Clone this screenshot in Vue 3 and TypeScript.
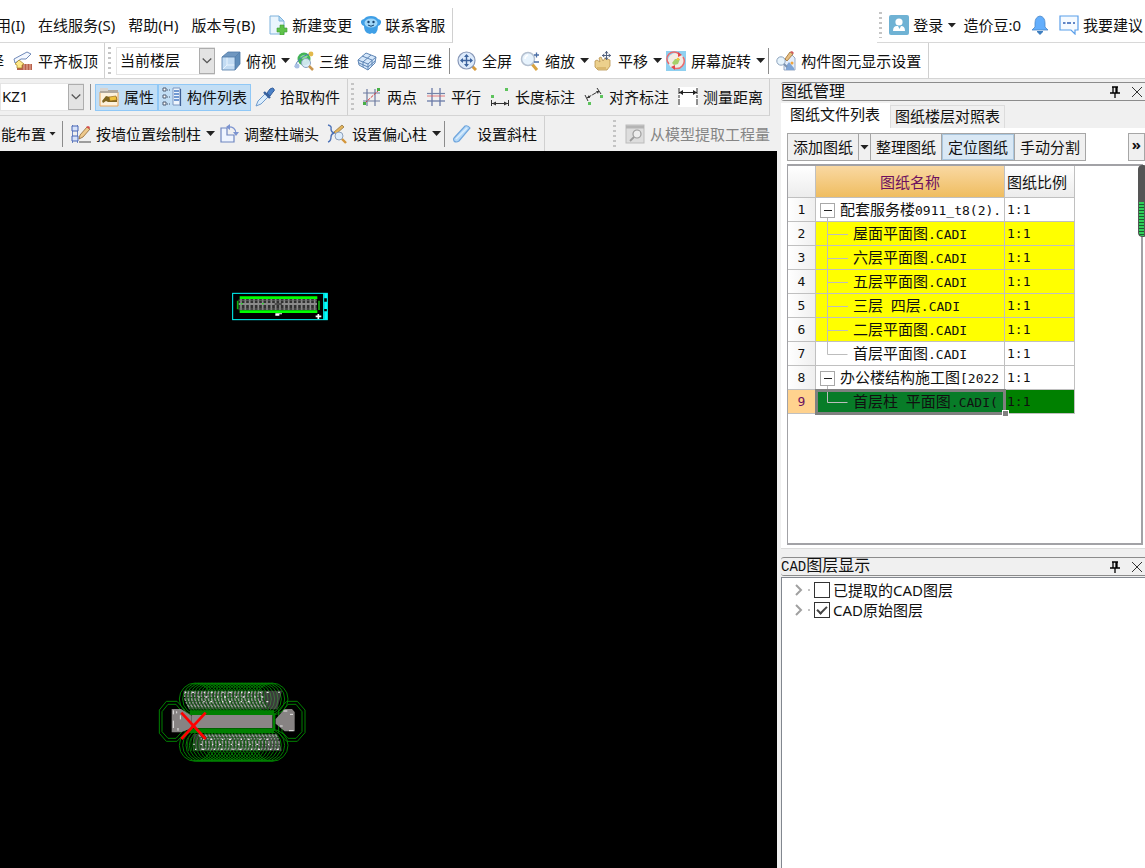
<script setup lang="ts">
import { ref } from 'vue'

interface Tool {
  icon: string
  label: string
  caret?: boolean
  active?: boolean
}

interface Run {
  text: string
  mono?: boolean
}

interface Drawing {
  kind: 'root' | 'child' | 'last'
  runs: Run[]
  tone: 'plain' | 'yellow' | 'green'
}

const menus: string[] = ['用(I)', '在线服务(S)', '帮助(H)', '版本号(B)']

const alignTools: Tool[] = [{ icon: 'alignTop', label: '平齐板顶' }]
const viewTools: Tool[] = [
  { icon: 'cube', label: '俯视', caret: true },
  { icon: 'orbit', label: '三维' },
  { icon: 'partial', label: '局部三维' },
]
const zoomTools: Tool[] = [
  { icon: 'fullscreen', label: '全屏' },
  { icon: 'zoom', label: '缩放', caret: true },
  { icon: 'pan', label: '平移', caret: true },
  { icon: 'rotate', label: '屏幕旋转', caret: true },
]
const displayTools: Tool[] = [{ icon: 'display', label: '构件图元显示设置' }]

const memberTools: Tool[] = [
  { icon: 'props', label: '属性', active: true },
  { icon: 'list', label: '构件列表', active: true },
  { icon: 'picker', label: '拾取构件' },
]
const axisTools: Tool[] = [
  { icon: 'twoPoint', label: '两点' },
  { icon: 'parallel', label: '平行' },
  { icon: 'length', label: '长度标注' },
  { icon: 'aligned', label: '对齐标注' },
  { icon: 'measure', label: '测量距离' },
]

const columnTools: Tool[] = [
  { icon: 'wallColumn', label: '按墙位置绘制柱', caret: true },
  { icon: 'endColumn', label: '调整柱端头' },
  { icon: 'offset', label: '设置偏心柱', caret: true },
]
const slantTools: Tool[] = [{ icon: 'slant', label: '设置斜柱' }]
const modelTools: Tool[] = [{ icon: 'model', label: '从模型提取工程量' }]

const drawings: Drawing[] = [
  { kind: 'root', runs: [{ text: '配套服务楼' }, { text: '0911_t8(2).', mono: true }], tone: 'plain' },
  { kind: 'child', runs: [{ text: '屋面平面图' }, { text: '.CADI', mono: true }], tone: 'yellow' },
  { kind: 'child', runs: [{ text: '六层平面图' }, { text: '.CADI', mono: true }], tone: 'yellow' },
  { kind: 'child', runs: [{ text: '五层平面图' }, { text: '.CADI', mono: true }], tone: 'yellow' },
  { kind: 'child', runs: [{ text: '三层' }, { text: ' ', mono: true }, { text: '四层' }, { text: '.CADI', mono: true }], tone: 'yellow' },
  { kind: 'child', runs: [{ text: '二层平面图' }, { text: '.CADI', mono: true }], tone: 'yellow' },
  { kind: 'last', runs: [{ text: '首层平面图' }, { text: '.CADI', mono: true }], tone: 'plain' },
  { kind: 'root', runs: [{ text: '办公楼结构施工图' }, { text: '[2022', mono: true }], tone: 'plain' },
  { kind: 'last', runs: [{ text: '首层柱' }, { text: ' ', mono: true }, { text: '平面图' }, { text: '.CADI(', mono: true }], tone: 'green' },
]
const selected = ref(8)

const floor = ref('当前楼层')
const member = ref('KZ1')
const extracted = ref(false)
const original = ref(true)

const range = (from: number, to: number, step: number): number[] => {
  const out: number[] = []
  for (let v = from; v <= to; v += step) out.push(v)
  return out
}
const rings = range(166, 396, 10)
const bars = range(57, 285, 13)

const icons: Record<string, string> = {
  newDoc:
    '<path d="M2 1h9l5 5v13H2z" fill="#eaf5fd" stroke="#7fb2dc"/><path d="M11 1v5h5z" fill="#b7dcf5" stroke="#7fb2dc"/><path d="M12 10h4v3h3v4h-3v3h-4v-3H9v-4h3z" fill="#5fc24a" stroke="#3d9a30" stroke-width=".6"/>',
  service:
    '<path d="M3 4Q5 1 10 1t7 3q4 1 3 4-1 3-3 3 0 4-2 7l-2 1-2-1-2 1-3-1Q3 16 3 11 1 11 0 8t3-4z" fill="#3f9fe6"/><ellipse cx="10" cy="8" rx="6.500" ry="4.500" fill="#9fd6f8"/><circle cx="7.500" cy="7" r="1.200" fill="#14406e"/><circle cx="12.500" cy="7" r="1.200" fill="#14406e"/><path d="M7 10q3 2.500 6 0" stroke="#14406e" fill="none"/>',
  user:
    '<rect x="0" y="0" width="20" height="20" rx="2" fill="#6fb2d4"/><circle cx="10" cy="7" r="3.600" fill="#fff"/><path d="M4 16q0-5 4-5h4q4 0 4 5z" fill="#fff"/><path d="M9 11h3l-1.500 3z" fill="#6fb2d4"/>',
  bell:
    '<path d="M10 1q5 1 5 7v4l3 3H2l3-3V8q0-6 5-7z" fill="#63aefc" stroke="#4a86c8" stroke-width=".8"/><path d="M7 16h6v1l-3 3-3-3z" fill="#3f7fc0"/>',
  chat:
    '<path d="M1 1h18v14h-3v4l-4-4H1z" fill="#f5faff" stroke="#5b9fea" stroke-width="1.200"/><path d="M4 8h2.500M8 8h4M14 8h2" stroke="#2f5fb4" stroke-width="1.400"/>',
  alignTop:
    '<path d="M1 8L14 1l4 2-5 5H8l-6 4z" fill="#f4f8ff" stroke="#6f89b8"/><path d="M9 13h10v6H4v-4h5z" fill="#b8604c"/><path d="M11 13v6M14 13v6M17 13v6" stroke="#e8b6a0"/><path d="M6 9l5 4-2 1v3H4v-3l-2-1z" fill="#ffe98a" stroke="#a08020" stroke-width=".7"/>',
  cube:
    '<path d="M1 6l6-5h12l-5 5z" fill="#6f97c0"/><path d="M14 6l5-5v12l-5 6z" fill="#5f8dba"/><path d="M1 6h13v13H1z" fill="#c3dcf3"/><path d="M6 6v8l-5 5M6 14h8" stroke="#e9f4fd" fill="none"/><path d="M1 6h13v13H1zM1 6l6-5h12v12l-5 6M14 6l5-5" stroke="#4f79a6" stroke-width=".8" fill="none"/>',
  orbit:
    '<circle cx="10" cy="8" r="6.500" fill="#42b358"/><path d="M6 6q4-4 8-1-3 3-2 6" fill="#8be08f"/><path d="M1 16q2-9 14-13" stroke="#4c79b8" fill="none"/><circle cx="17" cy="3" r="2.400" fill="#e2b94c"/><circle cx="3" cy="15" r="2.500" fill="#a9c0e4"/><circle cx="12" cy="12" r="4.500" fill="#dcecfb" fill-opacity=".9" stroke="#8aa3c0"/><path d="M15 15l4 4" stroke="#c99650" stroke-width="2.500"/>',
  partial:
    '<path d="M1 9l8-7 10 4-1 6-7 7-9-5z" fill="#d5e7fa"/><path d="M1 9l10 4 8-7M11 13v6M5 5l10 4M6 11l8-7M6 11v5M15 9v6M2 12l9 4 7-6M1 9l8-7 10 4-1 6-7 7-9-5z" stroke="#5f86b6" fill="none"/>',
  fullscreen:
    '<path d="M14 14l5 5" stroke="#d79a3c" stroke-width="3"/><circle cx="9.500" cy="9.500" r="8.500" fill="#dceafb" stroke="#8898b8" stroke-width="1.200"/><path d="M9.500 4v11M4 9.500h11" stroke="#3c639e" stroke-width="1.400"/><path d="M9.500 3L7 6h5zM9.500 16L7 13h5zM3 9.500L6 7v5zM16 9.500L13 7v5z" fill="#3c639e"/>',
  zoom:
    '<path d="M12 13l5 6" stroke="#d9a340" stroke-width="3"/><circle cx="8" cy="8" r="6.500" fill="#e7f3fd" stroke="#b4c0d0" stroke-width="1.500"/><path d="M5 8q0-3 3-4" stroke="#fff" stroke-width="1.500" fill="none"/><path d="M14 4h5M16.500 1.500v5M14 11h5" stroke="#4a6ea6" stroke-width="1.300"/>',
  pan:
    '<path d="M2 10l2-1 3 2-1-4 2-1 2 4 2-3 2 1 3 1v6l-3 4H5l-3-3z" fill="#ecd08c" stroke="#b8924c" stroke-width=".8"/><path d="M4 17h9" stroke="#c9a050"/><path d="M13.500 0v9M9 4.500h9" stroke="#53627e"/><path d="M13.500 0l-2 2.200h4zM13.500 9l-2-2.200h4zM9 4.500l2.200-2v4zM18 4.500l-2.200-2v4z" fill="#53627e"/>',
  rotate:
    '<rect x="0" y="0" width="20" height="20" fill="#8fd0f0"/><circle cx="10" cy="10" r="8" fill="#f3ece4"/><path d="M3 13a7 7 0 0 1 10-10M17 6a7.500 7.500 0 0 1-9 11" stroke="#ec6a6c" stroke-width="1.500" fill="none"/><path d="M12 1l4 3-4 2zM9 19l-4-3 4-2z" fill="#e2474c"/><path d="M6 12l3-4 5 0-2 5-4 1z" fill="#a6d06a"/><circle cx="12" cy="8" r="1.300" fill="#f4c53c"/>',
  display:
    '<path d="M8 10L15 3l4 4v12H8z" fill="#e4eefb" stroke="#7f95b8" stroke-width=".8"/><path d="M10 15l3-4 5 6v2h-8z" fill="#7fa4d4"/><circle cx="5" cy="10" r="4.200" fill="#e6f3fc" stroke="#8da3bd"/><path d="M8 13l3 3" stroke="#7d93b0" stroke-width="2"/><path d="M9 8l5-7 3 2-6 7z" fill="#e8c084" stroke="#9a6c30" stroke-width=".8"/><path d="M14 1l3 2 1-1-2-2z" fill="#d2565a"/><circle cx="16" cy="12" r="1.500" fill="#f0a43c"/>',
  props:
    '<path d="M1 5h18v14H1z" fill="#fdf1dc" stroke="#e8a558"/><path d="M1 3h18v3H1z" fill="#b0a89e"/><path d="M1 1h8v3H1z" fill="#d8d4cf"/><path d="M3 14l4-5 4 1 2 2 5-2v5H9l-2-1-3 2z" fill="#7e6420"/><path d="M10 10l7-1 1 4-7 1z" fill="#f0c23e" stroke="#8a5d14" stroke-width=".6"/>',
  list:
    '<path d="M1 1h3v3H1zM1 8h3v3H1zM1 15h3v3H1z" fill="#fff" stroke="#4c5a70"/><path d="M5 3h3M5 10h3M5 17h3" stroke="#4c5a70" stroke-dasharray="1 1"/><path d="M11 1h7v17h-7z" fill="#eef5fd" stroke="#7c97c0"/><path d="M12 4h5M12 7h5M12 10h5M12 13h5" stroke="#4a7cc4" stroke-width="1.300"/><path d="M18.500 2v17" stroke="#3e5f94" stroke-width="1.200"/>',
  picker:
    '<path d="M1 19l2-5L11 6l3 3-8 8z" fill="#dceefd" stroke="#6f9bcd"/><path d="M9 5l6 6" stroke="#355f9c" stroke-width="2.400"/><path d="M12 6l3-4q3-2 4 0 1 2-1 3l-3 4z" fill="#4a80c6" stroke="#355f9c"/>',
  twoPoint:
    '<path d="M5 2v17M13 2v17M1 6h17M1 14h17" stroke="#6d7ba0" stroke-width="1.200"/><path d="M3 16L17 3" stroke="#d43c3c" stroke-dasharray="3 1"/><path d="M1 15h3v3H1zM15 1h3v3h-3z" fill="#47b045"/>',
  parallel:
    '<path d="M6 1v18M14 1v18" stroke="#6a7aa8" stroke-width="1.300"/><path d="M1 6.500h18" stroke="#7484a8" stroke-width="1.200"/><path d="M1 9h18" stroke="#df5c5c" stroke-width=".8"/><path d="M1 14h18" stroke="#6a7aa8" stroke-width="1.300"/>',
  length:
    '<path d="M1 8h3v3H1zM15 1h3v3h-3z" fill="#5dc35c"/><path d="M1.500 13v6M18.500 13v6" stroke="#333"/><path d="M2 16.500h16" stroke="#333"/><path d="M2 16.500l4-2v4zM18 16.500l-4-2v4z" fill="#333"/>',
  aligned:
    '<path d="M1 8l3 6M13 1l4 6" stroke="#333"/><path d="M3 11L15 4" stroke="#333" stroke-dasharray="5 1"/><path d="M3 11l2-3 1 3zM15 4l-3 0 2 3z" fill="#333"/><path d="M4 15h3v3H4zM16 8h3v3h-3z" fill="#5dc35c"/>',
  measure:
    '<rect width="20" height="20" fill="#fff"/><path d="M1 1v18M19 1v18" stroke="#222" stroke-dasharray="6 1 3 1"/><path d="M1 5.500h18" stroke="#222"/><path d="M1 5.500l4-2.500v5zM19 5.500l-4-2.500v5z" fill="#222"/>',
  wallColumn:
    '<path d="M1.500 1v18M6.500 1v18" stroke="#6f88c4" stroke-width="1"/><path d="M1 2h6v5H1zM1 12h6v5H1z" fill="#d6e2fa" stroke="#4665b4"/><path d="M8 18h12" stroke="#777" stroke-width="1.400"/><path d="M9 11l7-8 3 2-7 8-4 2z" fill="#eec98c" stroke="#8d6736" stroke-width=".8"/><path d="M15 3l3 2 1-2-2-1z" fill="#d84c4c"/>',
  endColumn:
    '<path d="M2 4h6v7h7v7H2z" fill="#eef4ff" stroke="#6f86c0" stroke-width="1.200"/><path d="M8 3q9-1 9 7" fill="none" stroke="#7b93d0" stroke-width="1.300"/><path d="M11 0L7 3l4 3zM14 8h6l-3 4z" fill="#7b93d0"/>',
  offset:
    '<path d="M1 1q4 1 3 4 0 3 3 4-3 1-3 4 0 4-3 5" fill="none" stroke="#4f74b8" stroke-width="1.400"/><path d="M7 8l8-7 2 2-8 7z" fill="#e2b45c" stroke="#8a6a34" stroke-width=".7"/><circle cx="12" cy="12" r="4" fill="#ddecfb" stroke="#8da0ba"/><path d="M15 15l4 4" stroke="#d3953a" stroke-width="2.400"/>',
  slant:
    '<path d="M2 14L13 2q3-1 5 2L7 17q-3 2-5 0-1-2 0-3z" fill="#b4d8f7" stroke="#6fa5dc" stroke-width="1.200"/><path d="M4 15L15 4" stroke="#dceefd" stroke-width="1.500"/>',
  model:
    '<rect x="1" y="1" width="18" height="18" fill="#ddd" stroke="#bbb"/><path d="M1 3h18" stroke="#b4b4b4" stroke-width="3"/><circle cx="12" cy="10" r="4" fill="#eee" stroke="#9c9c9c" stroke-width="1.200"/><path d="M9 13l-4 4" stroke="#9c9c9c" stroke-width="1.800"/>',
}

const viewRow = [viewTools, zoomTools, displayTools]
</script>

<template>
  <div class="app">
    <header class="menubar">
      <nav class="menu">
        <button v-for="m in menus" :key="m" type="button" class="menu-item">{{ m }}</button>
        <button type="button" class="menu-item"><svg class="icon" viewBox="0 0 20 20" v-html="icons.newDoc" />新建变更</button>
        <button type="button" class="menu-item service"><svg class="icon" viewBox="0 0 20 20" v-html="icons.service" />联系客服</button>
      </nav>
      <div class="account">
        <span class="grip" />
        <button type="button" class="menu-item"><svg class="icon" viewBox="0 0 20 20" v-html="icons.user" />登录<span class="caret" /></button>
        <span class="beans">造价豆:0</span>
        <button type="button" class="menu-item bell" aria-label="消息"><svg class="icon" viewBox="0 0 20 20" v-html="icons.bell" /></button>
        <button type="button" class="menu-item"><svg class="icon" viewBox="0 0 20 20" v-html="icons.chat" />我要建议</button>
      </div>
    </header>

    <div class="viewbar">
      <div class="group first">
        <button type="button" class="clipped"><span>择</span></button>
        <button v-for="t in alignTools" :key="t.label" type="button" class="tool">
          <svg class="icon" viewBox="0 0 20 20" v-html="icons[t.icon]" />{{ t.label }}
        </button>
      </div>
      <div class="group">
        <span class="grip" />
        <label class="combo floor">
          <select v-model="floor" aria-label="楼层"><option>当前楼层</option></select>
          <span class="combo-arrow"><svg viewBox="0 0 16 28"><path d="M3 11l5 5 5-5" /></svg></span>
        </label>
        <template v-for="(tools, i) in viewRow" :key="i">
          <span v-if="i > 0" class="sep" />
          <button v-for="t in tools" :key="t.label" type="button" class="tool" :class="{ drop: t.caret }">
            <svg class="icon" viewBox="0 0 20 20" v-html="icons[t.icon]" />{{ t.label }}<span v-if="t.caret" class="caret" />
          </button>
        </template>
      </div>
    </div>

    <div class="body">
      <main class="work">
        <div class="bar">
          <div class="group">
            <label class="combo member">
              <select v-model="member" aria-label="构件"><option>KZ1</option></select>
              <span class="combo-arrow"><svg viewBox="0 0 16 28"><path d="M3 11l5 5 5-5" /></svg></span>
            </label>
            <span class="sep wide" />
            <button v-for="t in memberTools" :key="t.label" type="button" class="tool" :class="{ active: t.active }" :aria-pressed="t.active">
              <svg class="icon" viewBox="0 0 20 20" v-html="icons[t.icon]" />{{ t.label }}
            </button>
          </div>
          <div class="group spaced">
            <span class="grip" />
            <button v-for="t in axisTools" :key="t.label" type="button" class="tool">
              <svg class="icon" viewBox="0 0 20 20" v-html="icons[t.icon]" />{{ t.label }}
            </button>
          </div>
        </div>
        <div class="bar lower">
          <div class="group">
            <button type="button" class="smart">能布置<span class="caret" /></button>
            <span class="sep wide" />
            <button v-for="t in columnTools" :key="t.label" type="button" class="tool" :class="{ drop: t.caret }">
              <svg class="icon" viewBox="0 0 20 20" v-html="icons[t.icon]" />{{ t.label }}<span v-if="t.caret" class="caret" />
            </button>
            <span class="sep" />
            <button v-for="t in slantTools" :key="t.label" type="button" class="tool">
              <svg class="icon" viewBox="0 0 20 20" v-html="icons[t.icon]" />{{ t.label }}
            </button>
          </div>
          <div class="group model">
            <span class="grip" />
            <button v-for="t in modelTools" :key="t.label" type="button" class="tool" disabled>
              <svg class="icon" viewBox="0 0 20 20" v-html="icons[t.icon]" />{{ t.label }}
            </button>
          </div>
        </div>

        <div class="canvas">
          <svg class="sheet-a" viewBox="0 0 348 141">
            <g fill="none" stroke="#00ffff">
              <rect x="32" y="31" width="284" height="79" stroke-width="3" />
              <path d="M305 31v79" stroke-width="3" />
              <path d="M311 31v15M311 56v22M311 85v25" stroke-width="9" />
            </g>
            <rect x="50" y="48" width="235" height="34" fill="#303030" />
            <path v-for="x in bars" :key="x" :d="`M${x} 48v33`" stroke="#8a8a8a" stroke-width="5" />
            <path d="M50 63h235" stroke="#8a8a8a" stroke-width="6" />
            <path d="M50 52h235M50 78h235" stroke="#707070" stroke-width="2" />
            <path d="M158 63h22" stroke="#111" stroke-width="3" />
            <path d="M53 44h233M53 86h233" stroke="#00ff00" stroke-width="8" />
            <path d="M47 53v26M291 53v28" stroke="#10b010" stroke-width="5" />
            <path d="M160 91h20v3h-8v4h-12z" fill="#fff" />
            <path d="M57 61h5v3h-5zM120 61h5v3h-5z" fill="#00ff00" />
            <path d="M281 100h17M289 93v15" stroke="#fff" stroke-width="5" />
          </svg>
          <svg class="sheet-b" viewBox="0 0 570 315">
            <g fill="none" stroke="#008000" stroke-width="3">
              <circle v-for="x in rings" :key="'t' + x" :cx="x" cy="87" r="48" />
              <circle v-for="x in rings" :key="'b' + x" :cx="x" cy="226" r="48" />
              <path d="M79 94h32l24 26v68l-24 26H79l-21-24v-70z" />
              <path d="M84 103h24l18 22v60l-18 20H84l-18-20v-60z" />
              <path d="M440 94h32l23 26v68l-23 26h-32l-24-26v-68z" />
              <path d="M444 103h24l18 22v60l-18 20h-24l-18-20v-60z" />
            </g>
            <path d="M130 62h296l-14 56H146zM160 192h250l16 50H160z" fill="#6c6c6c" fill-opacity=".55" />
            <g fill="none" stroke="#0a5a0a" stroke-width="3">
              <path v-for="x in rings" :key="'gt' + x" :d="`M${x - 24} 60q-8 26 14 60`" />
              <path v-for="x in rings" :key="'gb' + x" :d="`M${x - 12} 190q-18 20-8 54`" />
            </g>
            <g fill="none" stroke="#9a9a9a" stroke-width="4" stroke-dasharray="9 3 5 4">
              <path v-for="x in rings" :key="'ht' + x" :d="`M${x - 30} 64q-8 26 14 50`" />
              <path v-for="x in rings" :key="'hb' + x" :d="`M${x + 10} 194q18 20 8 46`" />
            </g>
            <g fill="none" stroke="#e6e6e6" stroke-width="4" stroke-dasharray="4 17 6 29">
              <path d="M135 67h290M175 81h220M190 95h210M190 208h210M160 223h240M165 238h260" />
            </g>
            <path d="M150 128h252M150 182h252" stroke="#008000" stroke-width="14" />
            <path d="M402 130v50" stroke="#008000" stroke-width="8" />
            <rect x="155" y="135" width="242" height="39" fill="#8b8585" />
            <path d="M95 117h28l32 20v38l-32 12H95z" fill="#878383" />
            <path d="M100 121v12M100 152v22M110 124v6M114 174v8M121 136v12" stroke="#e8e8e8" stroke-width="3" />
            <path d="M464 126v58h-30l-27-23v-14l27-30h22z" fill="#878383" />
            <path d="M430 123h12M450 133h9M447 182h14M420 168h8" stroke="#e8e8e8" stroke-width="3" />
            <path d="M124 128l73 79M197 128l-73 79" stroke="#ff0000" stroke-width="8" />
          </svg>
        </div>
      </main>

      <aside class="side">
        <section class="drawings">
          <div class="caption">
            <h2>图纸管理</h2>
            <button type="button" aria-label="固定"><svg class="mark" viewBox="0 0 12 12"><path d="M3 1h6M4 1v6M7 1v6M8 1v6M1 7h10M6 7v5" stroke="#000" stroke-width="1.300" /></svg></button>
            <button type="button" aria-label="关闭"><svg class="mark" viewBox="0 0 12 12"><path d="M1 1l10 10M11 1L1 11" stroke="#333" /></svg></button>
          </div>
          <div class="tabs">
            <button type="button" class="tab on">图纸文件列表</button>
            <button type="button" class="tab">图纸楼层对照表</button>
          </div>
          <div class="page">
            <div class="actions">
              <button type="button" class="action">添加图纸</button>
              <button type="button" class="action more" aria-label="更多添加"><span class="caret" /></button>
              <button type="button" class="action">整理图纸</button>
              <button type="button" class="action pressed" aria-pressed="true">定位图纸</button>
              <button type="button" class="action">手动分割</button>
              <button type="button" class="action overflow">»</button>
            </div>
            <div class="grid">
              <table>
                <colgroup><col class="c-num" /><col class="c-name" /><col class="c-scale" /></colgroup>
                <thead>
                  <tr><th /><th class="name">图纸名称</th><th class="scale">图纸比例</th></tr>
                </thead>
                <tbody>
                  <tr v-for="(d, i) in drawings" :key="i" :class="[d.tone, { selected: i === selected }]" @click="selected = i">
                    <th scope="row">{{ i + 1 }}</th>
                    <td class="name">
                      <div class="node">
                        <svg v-if="d.kind === 'root'" class="branch root" viewBox="0 0 20 23">
                          <rect x="4.500" y="5.500" width="14" height="14" fill="#fff" stroke="#a8a8a8" />
                          <path d="M8 12.500h8" stroke="#222" /><path d="M11.500 20v3" stroke="#b8b8b8" />
                        </svg>
                        <svg v-else class="branch" viewBox="0 0 33 23">
                          <path :d="d.kind === 'child' ? 'M11.500 0v23M12 12.500h20' : 'M11.500 0v12.500h20'" fill="none" stroke="#bdbdbd" />
                        </svg>
                        <span class="title"><span v-for="(r, k) in d.runs" :key="k" :class="{ mono: r.mono }">{{ r.text }}</span></span>
                      </div>
                      <span v-if="i === selected" class="handle" />
                    </td>
                    <td class="mono">1:1</td>
                  </tr>
                </tbody>
              </table>
              <span class="meter" />
            </div>
          </div>
        </section>

        <section class="layers">
          <div class="caption">
            <h2><span class="cad">CAD</span>图层显示</h2>
            <button type="button" aria-label="固定"><svg class="mark" viewBox="0 0 12 12"><path d="M3 1h6M4 1v6M7 1v6M8 1v6M1 7h10M6 7v5" stroke="#000" stroke-width="1.300" /></svg></button>
            <button type="button" aria-label="关闭"><svg class="mark" viewBox="0 0 12 12"><path d="M1 1l10 10M11 1L1 11" stroke="#333" /></svg></button>
          </div>
          <ul class="tree">
            <li>
              <svg class="chev" viewBox="0 0 20 20"><path d="M2 5l5 5-5 5" fill="none" stroke="#a0a0a0" stroke-width="2" /><path d="M14 10h2" stroke="#888" /></svg>
              <label><input v-model="extracted" type="checkbox" />已提取的CAD图层</label>
            </li>
            <li>
              <svg class="chev" viewBox="0 0 20 20"><path d="M2 5l5 5-5 5" fill="none" stroke="#a0a0a0" stroke-width="2" /><path d="M14 10h2" stroke="#888" /></svg>
              <label><input v-model="original" type="checkbox" />CAD原始图层</label>
            </li>
          </ul>
        </section>
      </aside>
    </div>
  </div>
</template>

<style>
body {
  margin: 0;
}
</style>

<style scoped>
.app {
  display: flex;
  flex-direction: column;
  height: 100vh;
  overflow: hidden;
  background: #fff;
  color: #111;
  font: 15px/20px "Noto Sans", "Noto Sans CJK SC", sans-serif;
}
.app *,
.app *::before {
  box-sizing: border-box;
}
button {
  padding: 0;
  border: 0;
  background: none;
  color: inherit;
  font: inherit;
  white-space: nowrap;
}
.icon {
  flex: none;
  width: 20px;
  height: 20px;
}
.caret {
  flex: none;
  width: 9px;
  height: 5px;
  background: #222;
  clip-path: polygon(0 0, 100% 0, 50% 100%);
}
.grip {
  flex: none;
  align-self: stretch;
  width: 3px;
  margin: 4px 0;
  background: repeating-linear-gradient(#c4c4c4 0 2px, transparent 2px 5px);
}
.sep {
  flex: none;
  width: 1px;
  height: 26px;
  margin: 0 3px;
  background: #8c8c8c;
}
.sep.wide {
  margin: 0 4px 0 6px;
}

.menubar {
  display: flex;
  justify-content: space-between;
  flex: none;
  padding-top: 8px;
}
.menu,
.account {
  display: flex;
  align-items: center;
  height: 35px;
  border-bottom: 1px solid #d8d8d8;
}
.menu {
  gap: 13px;
  margin-left: -4px;
  padding-right: 7px;
  border-right: 1px solid #d0d0d0;
}
.menu-item {
  display: flex;
  align-items: center;
  gap: 4px;
}
.menu .service {
  margin-left: -4px;
}
.account {
  gap: 7px;
  padding: 0 2px;
}
.account .bell {
  margin: 0 2px;
}

.viewbar {
  display: flex;
  flex: none;
  height: 36px;
  border-bottom: 1px solid #d4d4d4;
}
.group {
  display: flex;
  align-items: center;
  border-right: 1px solid #d0d0d0;
}
.group.first {
  padding-right: 2px;
}
.clipped {
  display: flex;
  justify-content: flex-end;
  width: 4px;
  margin-right: 5px;
  overflow: hidden;
}
.viewbar .group .grip {
  margin-left: 3px;
}
.viewbar .group:last-child {
  padding-right: 3px;
}
.tool {
  display: flex;
  align-items: center;
  gap: 5px;
  height: 27px;
  padding: 0 4px;
}
.tool.drop {
  padding-right: 0;
}
.tool:disabled {
  color: #858585;
}
.tool.active {
  background: #c2def5;
  box-shadow: inset 0 0 0 1px #90c8f6;
}

.combo {
  display: grid;
  align-items: center;
}
.combo select,
.combo-arrow {
  grid-area: 1 / 1;
}
.combo select {
  appearance: none;
  width: 100%;
  height: 28px;
  padding: 0 20px 2px 3px;
  border: 1px solid #e4e4e4;
  border-radius: 0;
  background: #fff;
  color: inherit;
  font: inherit;
}
.combo-arrow {
  justify-self: end;
  width: 16px;
  height: 26px;
  border: 1px solid #adadad;
  background: #e3e3e3;
  pointer-events: none;
}
.combo-arrow svg {
  display: block;
  width: 100%;
  height: 100%;
}
.combo-arrow path {
  fill: none;
  stroke: #555;
  stroke-width: 1.5;
}
.floor {
  width: 99px;
  margin: 0 2px 0 5px;
}
.member {
  width: 84px;
}
.member select {
  padding-left: 1px;
}

.body {
  display: flex;
  flex: 1;
  min-height: 0;
  background: #f0f0f0;
}
.work {
  display: flex;
  flex: 1;
  flex-direction: column;
  min-width: 0;
}
.bar {
  display: flex;
  flex: none;
  height: 37px;
}
.bar .group {
  border-bottom: 1px solid #d4d4d4;
}
.bar .group:first-child {
  padding-right: 3px;
}
.bar .spaced {
  gap: 1px;
  padding-right: 2px;
}
.bar .spaced .grip {
  margin: 4px 3px;
}
.bar.lower {
  height: 35px;
}
.bar.lower .group {
  border-bottom: 0;
}
.bar.lower .model {
  margin-left: auto;
  padding-right: 3px;
  border-right: 0;
}
.bar.lower .model .grip {
  margin-right: 5px;
}
.smart {
  display: flex;
  align-items: center;
  gap: 3px;
  padding-left: 1px;
}
.smart .caret {
  width: 7px;
  height: 4px;
}
.canvas {
  position: relative;
  flex: 1;
  overflow: hidden;
  background: #000;
}
.sheet-a,
.sheet-b {
  position: absolute;
}
.sheet-a {
  top: 132px;
  left: 222px;
  width: 116px;
  height: 47px;
}
.sheet-b {
  top: 519px;
  left: 140px;
  width: 190px;
  height: 105px;
}

.side {
  display: flex;
  flex: 0 0 368px;
  flex-direction: column;
  padding: 3px 0 0 4px;
}
.caption {
  display: flex;
  align-items: center;
  flex: none;
  gap: 10px;
  height: 19px;
  padding-right: 2px;
  border: solid #8c8c8c;
  border-width: 1px 0 1px 0;
  border-radius: 3px 0 0 3px;
}
.caption h2 {
  flex: 1;
  margin: 0;
  font-size: 16px;
  font-weight: 400;
  line-height: 17px;
}
.caption button,
.mark {
  display: block;
  width: 12px;
  height: 12px;
}
.mark {
  fill: none;
}
.cad {
  font-family: "Liberation Mono", monospace;
  font-size: 14px;
}
.tabs {
  display: flex;
  align-items: flex-end;
  height: 27px;
  padding-top: 2px;
}
.tab {
  height: 23px;
  padding: 0 4px 2px;
  border: 1px solid #dcdcdc;
  border-bottom: 0;
}
.tab.on {
  height: 25px;
  padding: 0 9px 4px 8px;
  border-color: #fff;
  background: #fff;
}
.page {
  display: flex;
  flex: 1;
  flex-direction: column;
  padding: 5px 0 3px 6px;
  border-bottom: 1px solid #dcdcdc;
  background: #fff;
}
.actions {
  display: flex;
  flex: none;
  height: 28px;
}
.action {
  padding: 0 5px;
  border: 1px solid #a6a6a6;
  border-left-width: 0;
  background: #f0f0f0;
}
.action:first-child {
  border-left-width: 1px;
}
.action.more {
  display: flex;
  align-items: center;
  padding: 0 1px;
}
.action.pressed {
  padding: 0 6px;
  background: #d9e8f5;
  box-shadow: inset 0 0 0 1px #a9c6de;
}
.action.overflow {
  margin-left: auto;
  padding: 0 3px 10px;
  border-left-width: 1px;
  font-weight: 700;
}
.drawings {
  display: flex;
  flex: 0 0 467px;
  flex-direction: column;
}
.grid {
  position: relative;
  flex: 1;
  margin: 3px 2px 0 0;
  border: 2px solid #a2a2a6;
  border-left-width: 1px;
}
table {
  border-spacing: 0;
  table-layout: fixed;
  width: 287px;
}
.c-num {
  width: 28px;
}
.c-name {
  width: 189px;
}
.c-scale {
  width: 70px;
}
th,
td {
  height: 24px;
  padding: 0;
  border: solid #c0c0c0;
  border-width: 0 1px 1px 0;
  font-weight: 400;
}
thead th {
  height: 32px;
  background: linear-gradient(#fff, #ececec);
}
thead .name {
  background: linear-gradient(#f9d8a2, #efbd60);
  color: #6c1060;
}
thead .scale {
  padding-left: 2px;
  text-align: left;
}
tbody th {
  background: linear-gradient(90deg, #fff, #efefef);
  font: 13px/16px "DejaVu Sans Mono", monospace;
}
td.mono {
  padding-left: 2px;
}
.mono {
  font: 13px/16px "DejaVu Sans Mono", monospace;
  white-space: pre;
}
.yellow td {
  background: #ffff00;
}
.green td {
  background: #008000;
}
.selected th {
  background: #ffd28e;
  color: #6c1060;
}
.selected .name {
  position: relative;
  background: #087c28;
  outline: 3px solid #808080;
  outline-offset: -2px;
}
.handle {
  position: absolute;
  right: -5px;
  bottom: -4px;
  width: 7px;
  height: 7px;
  border: 1px solid #fff;
  background: #808080;
}
.node {
  display: flex;
  align-items: center;
  height: 23px;
  overflow: hidden;
  white-space: nowrap;
}
.branch {
  flex: none;
  width: 33px;
  height: 23px;
  margin-right: 4px;
}
.branch.root {
  width: 20px;
}
.title {
  padding-bottom: 2px;
  line-height: 20px;
}
.meter {
  position: absolute;
  top: -1px;
  right: -4px;
  width: 7px;
  height: 72px;
  border: 1px solid #555;
  border-radius: 4px 0 0 4px;
  background:
    repeating-linear-gradient(#2fd05a 0 2px, #1c5c30 2px 3px) 0 100% / 100% 34px no-repeat,
    #555;
}

.layers {
  display: flex;
  flex: 1;
  flex-direction: column;
  gap: 1px;
  min-height: 0;
  padding-top: 8px;
}
.tree {
  flex: 1;
  margin: 0;
  padding: 2px 0 0 12px;
  border: solid #82878f;
  border-width: 1px 0 0 1px;
  background: #fff;
  list-style: none;
}
.tree li,
.tree label {
  display: flex;
  align-items: center;
  height: 20px;
}
.chev {
  width: 20px;
  height: 20px;
}
.tree label {
  gap: 3px;
}
.tree input {
  display: grid;
  place-items: center;
  appearance: none;
  width: 16px;
  height: 16px;
  margin: 0;
  border: 1px solid #333;
  background: #fff;
}
.tree input:checked::before {
  content: "";
  width: 10px;
  height: 6px;
  border: solid #444;
  border-width: 0 0 2px 2px;
  transform: translateY(-1px) rotate(-45deg);
}
</style>
